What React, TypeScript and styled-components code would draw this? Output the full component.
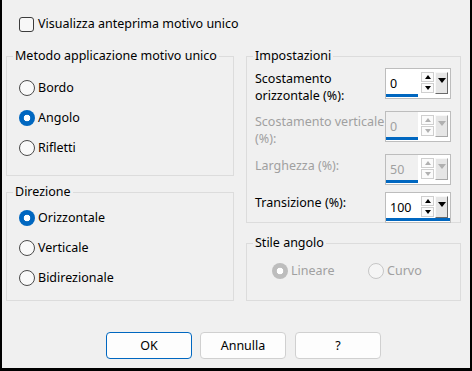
import React from "react";
import styled, { createGlobalStyle } from "styled-components";

const Global = createGlobalStyle`
  html, body { margin: 0; padding: 0; background: #f0f0f0; }
  body { font-family: "Noto Sans", "Open Sans", sans-serif; }
`;

const BLUE = "#0067c0";
const DIS = "#a0a0a0";

const Window = styled.div`
  width: 472px;
  height: 371px;
  box-sizing: border-box;
  border-left: 2px solid #000;
  border-right: 2px solid #000;
  border-bottom: 3px solid #000;
  background: #f0f0f0;
  font-family: "Noto Sans", "Open Sans", sans-serif;
  font-size: 12.5px;
  color: #000;
  display: flex;
  flex-direction: column;
  padding: 16px 9px 0 4px;
`;

const CheckRow = styled.label`
  display: flex;
  align-items: center;
  gap: 4px;
  height: 16px;
  line-height: 16px;
  padding-left: 13px;
`;

const CheckBox = styled.span`
  width: 15px;
  height: 15px;
  box-sizing: border-box;
  border: 1px solid #3c3c3c;
  border-radius: 3px;
  background: #f7f7f7;
`;

const Columns = styled.div`
  display: flex;
  gap: 12px;
  margin-top: 16px;
`;

const Column = styled.div<{ $w: number; $gap: number }>`
  width: ${(p) => p.$w}px;
  display: flex;
  flex-direction: column;
  gap: ${(p) => p.$gap}px;
`;

const Group = styled.fieldset<{ $h: number }>`
  margin: 0;
  padding: 0;
  min-width: 0;
  height: ${(p) => p.$h}px;
  box-sizing: border-box;
  border: 1px solid #dcdcdc;
`;

const Legend = styled.legend`
  margin-left: 6px;
  padding: 0 2px;
  line-height: 16px;
  height: 16px;
  color: #000;
`;

const RadioList = styled.div<{ $top: number; $left: number; $row?: boolean }>`
  display: flex;
  flex-direction: ${(p) => (p.$row ? "row" : "column")};
  gap: 14px;
  padding: ${(p) => p.$top}px 0 0 ${(p) => p.$left}px;
`;

const RadioItem = styled.label<{ $disabled?: boolean; $w?: number }>`
  display: flex;
  align-items: center;
  gap: 3px;
  height: 16px;
  line-height: 16px;
  color: ${(p) => (p.$disabled ? DIS : "#000")};
  ${(p) => (p.$w ? `width: ${p.$w}px;` : "")}
`;

const Circle = styled.span<{ $checked?: boolean; $disabled?: boolean }>`
  width: 16px;
  height: 16px;
  box-sizing: border-box;
  border-radius: 50%;
  flex: none;
  ${(p) => {
    if (p.$checked) {
      const c = p.$disabled ? "#bdbdbd" : BLUE;
      return `background: radial-gradient(circle, #fff 0 3px, ${c} 3.6px);`;
    }
    return `border: 1px solid ${p.$disabled ? "#c6c6c6" : "#4a4a4a"}; background: ${
      p.$disabled ? "#f5f5f5" : "#f9f9f9"
    };`;
  }}
`;

const Settings = styled.div`
  display: flex;
  flex-direction: column;
  gap: 7px;
  padding: 4px 9px 0 8px;
`;

const SettingRow = styled.div`
  display: flex;
  justify-content: space-between;
  align-items: flex-start;
`;

const SettingLabel = styled.div<{ $disabled?: boolean; $top?: number }>`
  padding-top: ${(p) => p.$top ?? 2}px;
  line-height: 17px;
  color: ${(p) => (p.$disabled ? DIS : "#000")};
`;

const SpinBox = styled.div<{ $wide?: boolean }>`
  position: relative;
  width: 66px;
  height: 31px;
  box-sizing: border-box;
  border: 1px solid #bdbdbd;
  background: #fff;
  display: flex;
  align-items: flex-start;
  &::after {
    content: "";
    position: absolute;
    left: 0;
    bottom: 1px;
    height: 3px;
    width: ${(p) => (p.$wide ? "100%" : "32px")};
    background: ${BLUE};
  }
`;

const Field = styled.div<{ $disabled?: boolean }>`
  width: 32px;
  height: 25px;
  box-sizing: border-box;
  padding: 7px 0 0 4px;
  line-height: 16px;
  background: ${(p) => (p.$disabled ? "#f0f0f0" : "#fff")};
  color: ${(p) => (p.$disabled ? DIS : "#000")};
`;

const SpinCol = styled.div`
  display: flex;
  flex-direction: column;
  gap: 1px;
  margin: 3px 0 0 3px;
`;

const SpinBtn = styled.div`
  width: 13px;
  height: 10px;
  box-sizing: border-box;
  border: 1px solid #cfcfcf;
  background: #fbfbfb;
  display: flex;
  align-items: center;
  justify-content: center;
`;

const Drop = styled.div<{ $disabled?: boolean }>`
  width: 13px;
  height: 22px;
  margin: 3px 0 0 1px;
  box-sizing: border-box;
  background: #e6e6e6;
  border-top: 1px solid #f8f8f8;
  border-left: 1px solid #f8f8f8;
  border-right: 1px solid ${(p) => (p.$disabled ? "#a8a8a8" : "#6a6a6a")};
  border-bottom: 1px solid ${(p) => (p.$disabled ? "#a8a8a8" : "#6a6a6a")};
  display: flex;
  justify-content: center;
  padding-top: 5px;
`;

const ButtonRow = styled.div`
  display: flex;
  gap: 8px;
  margin-top: 31px;
  padding-left: 100px;
`;

const Button = styled.button<{ $primary?: boolean }>`
  width: 86px;
  height: 27px;
  box-sizing: border-box;
  border: 1px solid ${(p) => (p.$primary ? BLUE : "#d0d0d0")};
  border-radius: 4px;
  background: #fdfdfd;
  font-family: "Noto Sans", "Open Sans", sans-serif;
  font-size: 12.5px;
  color: #000;
  padding: 0;
  &:last-child {
    margin-left: 1px;
  }
`;

const Tri = ({ up, color, w, h }: { up?: boolean; color: string; w: number; h: number }) => (
  <svg width={w} height={h} viewBox={`0 0 ${w} ${h}`}>
    <polygon
      points={up ? `0,${h} ${w},${h} ${w / 2},0` : `0,0 ${w},0 ${w / 2},${h}`}
      fill={color}
    />
  </svg>
);

const Spinner = ({ value, disabled, wide }: { value: string; disabled?: boolean; wide?: boolean }) => {
  const c = disabled ? "#b0b0b0" : "#000";
  return (
    <SpinBox $wide={wide}>
      <Field $disabled={disabled}>{value}</Field>
      <SpinCol>
        <SpinBtn>
          <Tri up color={c} w={6} h={4} />
        </SpinBtn>
        <SpinBtn>
          <Tri color={c} w={6} h={4} />
        </SpinBtn>
      </SpinCol>
      <Drop $disabled={disabled}>
        <Tri color={c} w={8} h={5} />
      </Drop>
    </SpinBox>
  );
};

const Radio = ({
  label,
  checked,
  disabled,
  w,
}: {
  label: string;
  checked?: boolean;
  disabled?: boolean;
  w?: number;
}) => (
  <RadioItem $disabled={disabled} $w={w}>
    <Circle $checked={checked} $disabled={disabled} />
    {label}
  </RadioItem>
);

export default function App() {
  return (
    <>
      <Global />
      <Window>
        <CheckRow>
          <CheckBox />
          Visualizza anteprima motivo unico
        </CheckRow>
        <Columns>
          <Column $w={228} $gap={8}>
            <Group $h={128}>
              <Legend>Metodo applicazione motivo unico</Legend>
              <RadioList $top={16} $left={12}>
                <Radio label="Bordo" />
                <Radio label="Angolo" checked />
                <Radio label="Rifletti" />
              </RadioList>
            </Group>
            <Group $h={117}>
              <Legend>Direzione</Legend>
              <RadioList $top={10} $left={12}>
                <Radio label="Orizzontale" checked />
                <Radio label="Verticale" />
                <Radio label="Bidirezionale" />
              </RadioList>
            </Group>
          </Column>
          <Column $w={215} $gap={12}>
            <Group $h={175}>
              <Legend>Impostazioni</Legend>
              <Settings>
                <SettingRow>
                  <SettingLabel>
                    Scostamento
                    <br />
                    orizzontale (%):
                  </SettingLabel>
                  <Spinner value="0" />
                </SettingRow>
                <SettingRow>
                  <SettingLabel $disabled>
                    Scostamento verticale
                    <br />
                    (%):
                  </SettingLabel>
                  <Spinner value="0" disabled />
                </SettingRow>
                <SettingRow>
                  <SettingLabel $disabled $top={3}>
                    Larghezza (%):
                  </SettingLabel>
                  <Spinner value="50" disabled />
                </SettingRow>
                <SettingRow>
                  <SettingLabel>Transizione (%):</SettingLabel>
                  <Spinner value="100" wide />
                </SettingRow>
              </Settings>
            </Group>
            <Group $h={66}>
              <Legend>Stile angolo</Legend>
              <RadioList $top={12} $left={25} $row>
                <Radio label="Lineare" checked disabled w={82} />
                <Radio label="Curvo" disabled />
              </RadioList>
            </Group>
          </Column>
        </Columns>
        <ButtonRow>
          <Button $primary>OK</Button>
          <Button>Annulla</Button>
          <Button>?</Button>
        </ButtonRow>
      </Window>
    </>
  );
}
